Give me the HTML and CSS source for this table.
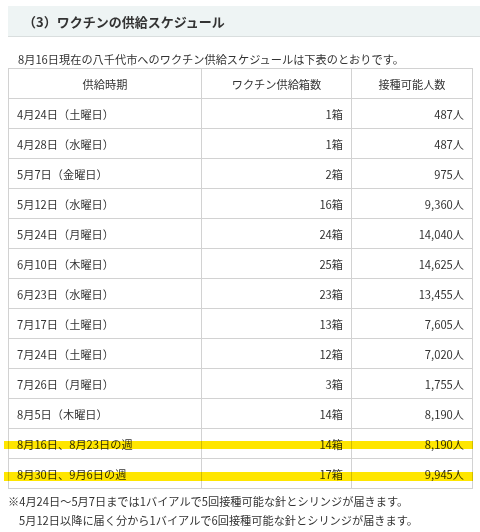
FILE: index.html
```html
<!DOCTYPE html>
<html lang="ja">
<head>
<meta charset="utf-8">
<link rel="stylesheet" href="styles.css">
</head>
<body>
<h2 class="heading">（3）ワクチンの供給スケジュール</h2>
<p class="intro">8月16日現在の八千代市へのワクチン供給スケジュールは下表のとおりです。</p>
<div class="table-wrap">
<table class="schedule">
<thead>
<tr><th class="c1">供給時期</th><th class="c2">ワクチン供給箱数</th><th class="c3">接種可能人数</th></tr>
</thead>
<tbody>
<tr><td>4月24日（土曜日）</td><td class="num">1箱</td><td class="num">487人</td></tr>
<tr><td>4月28日（水曜日）</td><td class="num">1箱</td><td class="num">487人</td></tr>
<tr><td>5月7日（金曜日）</td><td class="num">2箱</td><td class="num">975人</td></tr>
<tr><td>5月12日（水曜日）</td><td class="num">16箱</td><td class="num">9,360人</td></tr>
<tr><td>5月24日（月曜日）</td><td class="num">24箱</td><td class="num">14,040人</td></tr>
<tr><td>6月10日（木曜日）</td><td class="num">25箱</td><td class="num">14,625人</td></tr>
<tr><td>6月23日（水曜日）</td><td class="num">23箱</td><td class="num">13,455人</td></tr>
<tr><td>7月17日（土曜日）</td><td class="num">13箱</td><td class="num">7,605人</td></tr>
<tr><td>7月24日（土曜日）</td><td class="num">12箱</td><td class="num">7,020人</td></tr>
<tr><td>7月26日（月曜日）</td><td class="num">3箱</td><td class="num">1,755人</td></tr>
<tr><td>8月5日（木曜日）</td><td class="num">14箱</td><td class="num">8,190人</td></tr>
<tr><td>8月16日、8月23日の週</td><td class="num">14箱</td><td class="num">8,190人</td></tr>
<tr><td>8月30日、9月6日の週</td><td class="num">17箱</td><td class="num">9,945人</td></tr>
</tbody>
</table>
<span class="marker marker-1"></span>
<span class="marker marker-2"></span>
</div>
<div class="notes">
<p class="note">※4月24日～5月7日までは1バイアルで5回接種可能な針とシリンジが届きます。</p>
<p class="note note-indent">5月12日以降に届く分から1バイアルで6回接種可能な針とシリンジが届きます。</p>
</div>
</body>
</html>
```

FILE: styles.css
```css
html, body {
  margin: 0;
  padding: 0;
  background: #ffffff;
}

body {
  font-family: "Noto Sans CJK JP", "Noto Sans", sans-serif;
  font-size: 11.2px;
  color: #333333;
  width: 480px;
  overflow: hidden;
}

.heading {
  margin: 6px 0 0 8px;
  height: 31px;
  box-sizing: border-box;
  padding-left: 15px;
  display: flex;
  align-items: center;
  background: #eef4f4;
  border-bottom: 1px solid #d9dede;
  font-size: 13px;
  font-weight: bold;
  color: #333333;
}

.intro {
  margin: 12px 0 0 18px;
  line-height: 20px;
  height: 19px;
}

.table-wrap {
  position: relative;
  margin-left: 8px;
  width: 464px;
}

.schedule {
  width: 464px;
  border-collapse: collapse;
  table-layout: fixed;
}

.schedule th,
.schedule td {
  border: 1px solid #d2d2d2;
  height: 30px;
  padding: 0 8px;
  box-sizing: border-box;
  font-weight: normal;
  line-height: 16px;
}

.schedule th {
  text-align: center;
}

.c1 { width: 193px; }
.c2 { width: 150px; }
.c3 { width: 121px; }

.schedule td.num {
  text-align: right;
}

.marker {
  position: absolute;
  left: -4px;
  width: 469px;
  background: #ffe600;
  mix-blend-mode: multiply;
  pointer-events: none;
}

.marker-1 {
  top: 373px;
  height: 8px;
}

.marker-2 {
  top: 404px;
  height: 9px;
}

.notes {
  margin-top: 3px;
}

.note {
  margin: 0 0 0 8px;
  line-height: 19px;
}

.note-indent {
  margin-left: 19px;
}
```
